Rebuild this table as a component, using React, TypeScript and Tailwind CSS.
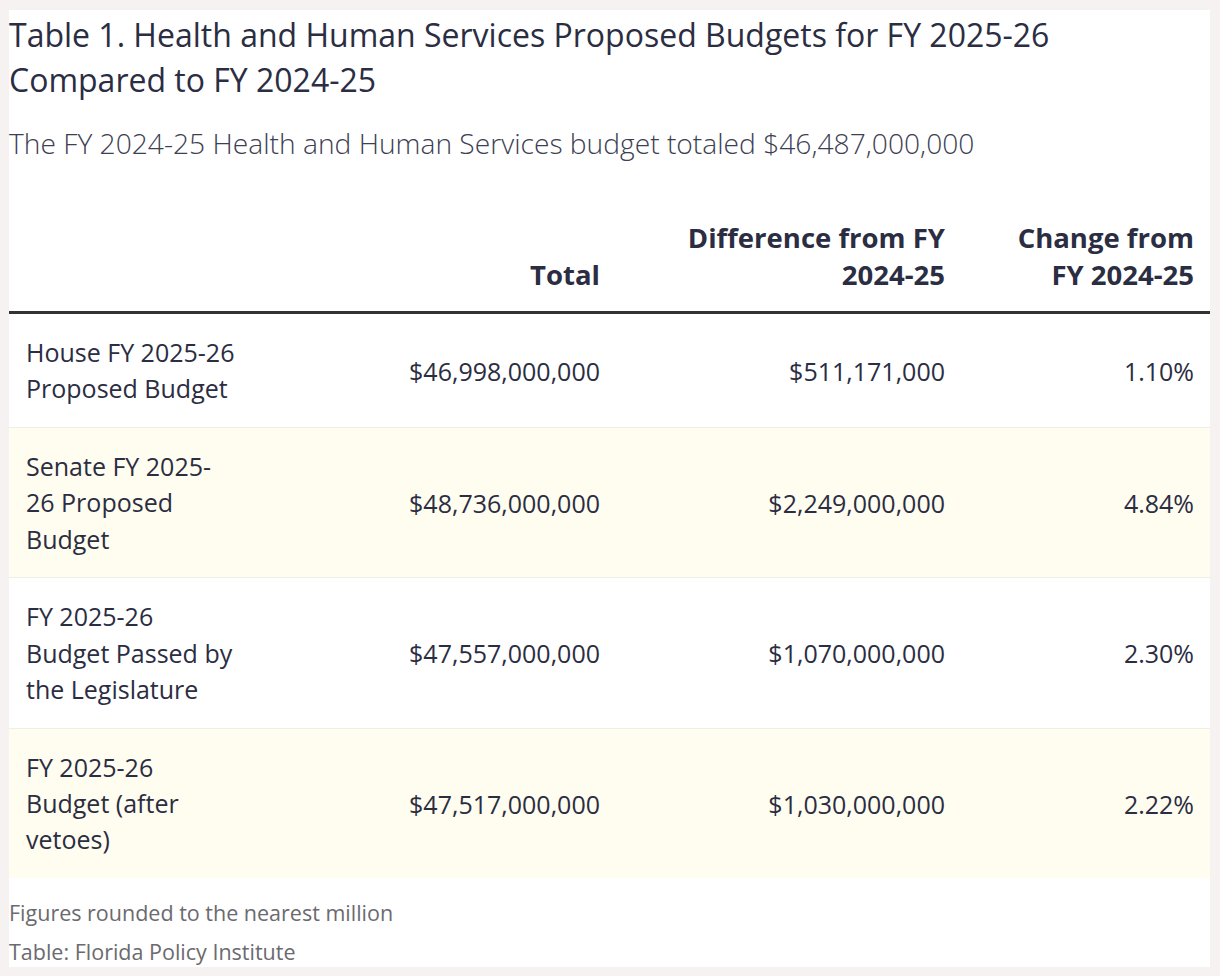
import React from 'react';

type Row = { label: string[]; total: string; diff: string; change: string };

const rows: Row[] = [
    { label: ['House FY 2025-26', 'Proposed Budget'], total: '$46,998,000,000', diff: '$511,171,000', change: '1.10%' },
    { label: ['Senate FY 2025-', '26 Proposed', 'Budget'], total: '$48,736,000,000', diff: '$2,249,000,000', change: '4.84%' },
    { label: ['FY 2025-26', 'Budget Passed by', 'the Legislature'], total: '$47,557,000,000', diff: '$1,070,000,000', change: '2.30%' },
    { label: ['FY 2025-26', 'Budget (after', 'vetoes)'], total: '$47,517,000,000', diff: '$1,030,000,000', change: '2.22%' },
];

const font = { fontFamily: '"Open Sans", Lato, sans-serif' };

export default function App() {
    return (
        <div className="min-h-[976px] bg-[#f6f2f1] pt-[10px] pb-[10px] pl-[9px] pr-[10px]" style={font}>
            <div className="bg-white pt-[2px]">
                <h1 className="text-[32px] leading-[45px] text-[#2b2d42] font-normal">
                    Table 1. Health and Human Services Proposed Budgets for FY 2025-26
                    <br />
                    Compared to FY 2024-25
                </h1>
                <p className="mt-[22px] text-[28.2px] leading-[39px] font-light text-[#3d4052]">
                    The FY 2024-25 Health and Human Services budget totaled $46,487,000,000
                </p>

                <table className="mt-[56px] w-full table-fixed border-collapse text-[#2b2d42]">
                    <colgroup>
                        <col className="w-[251px]" />
                        <col className="w-[356px]" />
                        <col className="w-[345px]" />
                        <col />
                    </colgroup>
                    <thead>
                        <tr className="border-b-[3px] border-[#333333]">
                            <th />
                            <th className="px-4 pb-[18px] text-right align-bottom text-[27.5px] leading-[37px] font-bold">Total</th>
                            <th className="px-4 pb-[18px] text-right align-bottom text-[27.5px] leading-[37px] font-bold">
                                Difference from FY
                                <br />
                                2024-25
                            </th>
                            <th className="px-4 pb-[18px] text-right align-bottom text-[27.5px] leading-[37px] font-bold">
                                Change from
                                <br />
                                FY 2024-25
                            </th>
                        </tr>
                    </thead>
                    <tbody>
                        {rows.map((r, i) => (
                            <tr
                                key={i}
                                className={`${i < rows.length - 1 ? 'border-b border-[#efefea]' : ''} ${i % 2 === 1 ? 'bg-[#fffdf0]' : 'bg-white'}`}
                            >
                                <td className="pl-[17px] pr-4 pt-5 pb-[20.5px] text-[25px] leading-[36.3px]">
                                    {r.label.map((l, j) => (
                                        <div key={j}>{l}</div>
                                    ))}
                                </td>
                                <td className="px-4 py-5 text-right text-[25px] leading-[36px]">{r.total}</td>
                                <td className="px-4 py-5 text-right text-[25px] leading-[36px]">{r.diff}</td>
                                <td className="px-4 py-5 text-right text-[25px] leading-[36px]">{r.change}</td>
                            </tr>
                        ))}
                    </tbody>
                </table>

                <div className="mt-[20px] flex flex-col gap-[9px] text-[21.5px] leading-[30px] text-[#6b6a6f]">
                    <p>Figures rounded to the nearest million</p>
                    <p>Table: Florida Policy Institute</p>
                </div>
            </div>
        </div>
    );
}
